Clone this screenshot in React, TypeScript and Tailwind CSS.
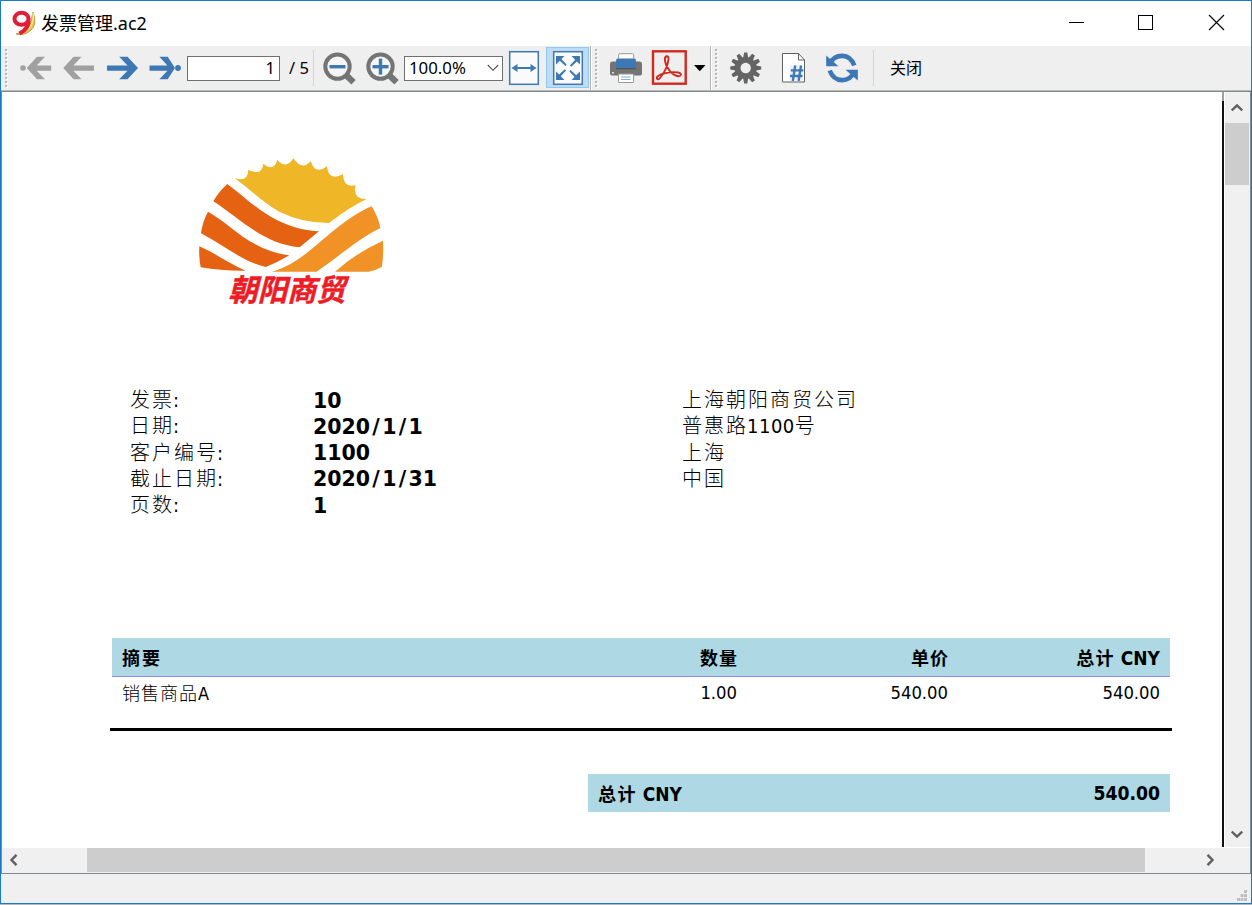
import React from "react";

const BLUE = "#3d78b5";
const GRAY = "#a0a0a0";

/* Toolbar drawings share one coordinate system: y runs from 46 to 90, x is the window x. */
function Tool({ x, w, children }: { x: number; w: number; children: React.ReactNode }) {
  return (
    <svg className="block h-[44px] shrink-0" width={w} height={44} viewBox={`${x} 46 ${w} 44`}>
      {children}
    </svg>
  );
}

function Grip({ x }: { x: number }) {
  return (
    <>
      {[49, 53, 57, 61, 65, 69, 73, 77, 81, 85].map((y) => (
        <g key={y}>
          <rect x={x} y={y + 1} width="2" height="2" fill="#fff" />
          <rect x={x - 1} y={y} width="2" height="2" fill="#b4b4b4" />
        </g>
      ))}
    </>
  );
}

function Magnifier({ cx, plus }: { cx: number; plus?: boolean }) {
  return (
    <>
      <path d={`M${cx + 8} 75 L${cx + 15.500} 82.300`} stroke="#747474" strokeWidth="6.2" />
      <circle cx={cx - 0.500} cy="66.6" r="12.200" fill="#f5f5f5" stroke="#747474" strokeWidth="4" />
      <rect x={cx - 8.500} y="65" width="16" height="3.4" fill={BLUE} />
      {plus && <rect x={cx - 2.200} y="58.6" width="3.4" height="16" fill={BLUE} />}
    </>
  );
}

const teeth = Array.from({ length: 12 }, (_, i) => i * 30);

function Toolbar() {
  return (
    <div className="flex h-[44px] shrink-0 items-center bg-[#efefef]">
      <Tool x={1} w={185}>
        <Grip x={6} />
        <circle cx="23" cy="68" r="2.8" fill={GRAY} />
        <path d="M26.7 68 37 56.8h8l-8.3 8.6H51.2v5.4H36.7l8.3 8.4h-8Z" fill={GRAY} />
        <path d="M63.3 68 73.6 56.8h8l-8.3 8.6H94v5.4H73.3l8.3 8.4h-8Z" fill={GRAY} />
        <path d="M138 68 127.5 56.8h-8.3l8.3 8.6H107v5.4h20.5l-8.3 8.4h8.3Z" fill={BLUE} />
        <path d="M175 68 167.7 56.8h-8.3l8 8.6H149.5v5.4h17.9l-8 8.4h8.3Z" fill={BLUE} />
        <circle cx="178" cy="68" r="2.9" fill={BLUE} />
      </Tool>
      <div className="ml-[1px] flex h-[25px] w-[93px] shrink-0 items-center justify-end border border-[#707070] bg-white pr-[4px] text-[16.5px] leading-none">
        1
      </div>
      <span className="ml-[9px] w-[24px] shrink-0 whitespace-pre text-[16.5px] leading-none">/ 5</span>
      <Tool x={313} w={91}>
        <rect x="313" y="50" width="1" height="36" fill="#d2d2d2" />
        <Magnifier cx={338} />
        <Magnifier cx={381} plus />
      </Tool>
      <div className="flex h-[25px] w-[99px] shrink-0 items-center justify-between border border-[#707070] bg-white pl-[4px] pr-[3px] text-[16.8px] leading-none">
        <span>100.0%</span>
        <svg width="12" height="8" viewBox="0 0 12 8">
          <path d="M.8 1 6 6.3 11.2 1" fill="none" stroke="#505050" strokeWidth="1.1" />
        </svg>
      </div>
      <Tool x={503} w={387}>
        <rect x="509.7" y="51.7" width="28.6" height="32.6" fill="#fafafa" stroke={BLUE} strokeWidth="1.5" />
        <path d="M511.5 68l6-4v2.9h13V64l6 4-6 4v-2.9h-13V72Z" fill={BLUE} />
        <rect x="546.5" y="47.5" width="42" height="40" fill="#c0dcf3" stroke="#90c8f6" />
        <rect x="553.7" y="51.7" width="28.6" height="32.6" fill="#fafafa" stroke={BLUE} strokeWidth="1.5" />
        {[0, 90, 180, 270].map((r) => (
          <path key={r} transform={`rotate(${r} 568 68)`} d="M556 56h8.500l-3.100 3.100 5.300 5.700-1.300 1.300-5.600-5.300-3.800 3.700Z" fill={BLUE} />
        ))}
        <rect x="590" y="46" width="1" height="44" fill="#b4b4b4" />
        <rect x="591" y="46" width="1" height="44" fill="#fff" />
        <Grip x={596} />
        <path d="M610 73.500V64q0-2.500 2.500-2.500H616v7h20v-7h3.500q2.500 0 2.500 2.500v9.500q0 2-2 2h-28q-2 0-2-2Z" fill="#747474" />
        <rect x="618.7" y="53.7" width="15" height="9" rx="1" fill="#fff" stroke="#989898" />
        <path d="M616 60.500q0-2 2-2h16q2 0 2 2v7.500h-20Z" fill={BLUE} />
        <rect x="616" y="68" width="20" height="1.300" fill="#555" />
        <rect x="618.5" y="74" width="15" height="8.500" rx=".5" fill="#fff" stroke="#989898" />
        <path d="M621 77h9.500M621 79.500h9.500" stroke="#75a3d2" strokeWidth=".9" />
        <rect x="612" y="72" width="2" height="1.500" fill="#ddd" />
        <rect x="653" y="51.300" width="32.700" height="32.400" fill="#efefef" stroke="#d2291f" strokeWidth="2.400" />
        <path
          d="M665 61C664 55.500 669 54.500 668.500 59 668 65 664 73 660 78 658 80.500 655.500 78.500 657.500 76.500 661 73 672 71.500 678 72.500 683 73.500 681 77 677 76 671 74.500 666 67 665 61Z"
          fill="none"
          stroke="#d2291f"
          strokeWidth="1.900"
        />
        <path d="M694 65h11.500l-5.700 6.200Z" fill="#000" />
        <rect x="710" y="46" width="1" height="44" fill="#b4b4b4" />
        <rect x="711" y="46" width="1" height="44" fill="#fff" />
        <Grip x={716} />
        {teeth.map((a) => (
          <path key={a} transform={`rotate(${a} 745.7 68)`} d="M743 59l1.100-6.500h3.200l1.100 6.500Z" fill="#646464" />
        ))}
        <circle cx="745.7" cy="68" r="8.100" fill="none" stroke="#646464" strokeWidth="5.800" />
        <path d="M782.500 53.500h16l6 6.500v22h-22Z" fill="#fff" stroke="#606060" />
        <path d="M798.500 53.500V60h6" fill="none" stroke="#606060" />
        <rect x="790" y="65" width="13" height="16" fill="#edf1f7" />
        <path d="M795.200 65.500 792.800 81M801 65.500 798.600 81M790.800 70.300h12.500M790 76h12.500" stroke={BLUE} strokeWidth="2.300" />
        <path d="M830 63.500C835 53.500 849.500 52.500 854.300 65.500" fill="none" stroke={BLUE} strokeWidth="4.600" />
        <path d="M826.200 55.500v10.700h12.300l-4-3.500-4-3.500Z" fill={BLUE} />
        <path d="M854 72.500C849 82.500 834.500 83.500 829.700 70.500" fill="none" stroke={BLUE} strokeWidth="4.600" />
        <path d="M857.800 80.500V69.800h-12.300l4 3.500 4 3.500Z" fill={BLUE} />
        <rect x="873" y="50" width="1" height="36" fill="#d2d2d2" />
      </Tool>
      <span className="text-[16px] leading-none">关闭</span>
    </div>
  );
}

function Logo() {
  return (
    <svg className="ml-[188px] block" width="210" height="165" viewBox="0 0 630 495">
      <path
        d="M134 84Q174 98 175 59Q216 80 220 41Q252 67 262 29Q288 60 310 25Q337 64 362 33Q376 77 411 48Q415 95 459 73Q460 115 497 105Q487 148 530 147Q482 169 417 219Q337 219 268 185C218 158 190 126 134 84Z"
        fill="#efb727"
      />
      <path d="M112 102C174 147 253 238 387 244L329 292C221 282 158 212 70 154Q86 125 112 102Z" fill="#e56212" />
      <path d="M54 185C123 222 178 300 298 316Q262 338 227 351C156 335 100 284 33 250Q37 216 54 185Z" fill="#e56212" />
      <path d="M28 289C75 309 119 342 167 362Q97 363 32 352Q26 321 28 289Z" fill="#e56212" />
      <path d="M545 169Q564 199 571 234C507 265 440 324 380 365H246C359 334 423 221 545 169Z" fill="#f09226" />
      <path d="M579 272Q581 310 576 350Q558 361 535 365H435Q499 308 579 272Z" fill="#f09226" />
      <text
        transform="translate(115 453) skewX(-14)"
        textLength="352"
        lengthAdjust="spacingAndGlyphs"
        fontSize="91"
        fontWeight="700"
        fontFamily="'Noto Sans CJK SC', sans-serif"
        fill="#ee1c25"
        stroke="#ee1c25"
        strokeWidth="1.5"
      >
        朝阳商贸
      </text>
    </svg>
  );
}

const details = [
  ["发票", "10"],
  ["日期", "2020/1/1"],
  ["客户编号", "1100"],
  ["截止日期", "2020/1/31"],
  ["页数", "1"],
];

function Value({ text }: { text: string }) {
  return (
    <>
      {text.split("/").map((part, i) => (
        <React.Fragment key={i}>
          {i > 0 && <span className="px-[2.3px]">/</span>}
          {part}
        </React.Fragment>
      ))}
    </>
  );
}

function Report() {
  return (
    <div className="flex h-full w-[1221px] flex-col pt-[58px] font-['DejaVu_Sans_Condensed','DejaVu_Sans','Noto_Sans_CJK_SC',sans-serif] [font-stretch:condensed]">
      <Logo />
      <div className="mt-[72px] flex h-[251px] pl-[128px] text-[20px] leading-[26.25px]">
        <div className="w-[183px] font-light tracking-[2px]">
          {details.map(([label]) => (
            <div key={label} className="flex h-[26.25px] whitespace-nowrap">
              <span>{label}</span>
              <span className="-ml-px font-normal">:</span>
            </div>
          ))}
        </div>
        <div className="w-[369px] pt-[0.5px] font-['DejaVu_Sans',sans-serif] text-[20.5px] font-bold [font-stretch:normal]">
          {details.map(([label, value]) => (
            <div key={label} className="h-[26.25px] whitespace-nowrap">
              <Value text={value} />
            </div>
          ))}
        </div>
        <div className="font-light tracking-[2px]">
          <div className="h-[26.25px]">上海朝阳商贸公司</div>
          <div className="h-[26.25px]">
            普惠路<span className="-ml-px font-normal tracking-[0.5px]">1100</span>号
          </div>
          <div className="h-[26.25px]">上海</div>
          <div className="h-[26.25px]">中国</div>
        </div>
      </div>
      <div className="ml-[108px] w-[1062px] border-b-[3px] border-black pl-[2px] pr-[2px] text-[18px]">
        <div className="grid h-[39px] grid-cols-[476px_160px_211px_211px] items-center border-b border-[#8c8cf5] bg-[#add8e4] pt-[2px] font-bold">
          <span className="pl-[10px] tracking-[2px]">摘要</span>
          <span className="pr-[10px] text-right tracking-[1px]">数量</span>
          <span className="pr-[10px] text-right tracking-[1px]">单价</span>
          <span className="pr-[10px] text-right">
            <span className="tracking-[1.5px]">总计</span> <span className="text-[19px]">CNY</span>
          </span>
        </div>
        <div className="grid h-[51px] grid-cols-[476px_160px_211px_211px] items-start pt-[1.5px] leading-[28px]">
          <span className="pl-[10px] pt-[1.5px] font-light tracking-[1px]">
            销售商品<span className="font-normal">A</span>
          </span>
          <span className="pr-[11px] text-right text-[18.3px]">1.00</span>
          <span className="pr-[11px] text-right text-[18.3px]">540.00</span>
          <span className="pr-[10px] text-right text-[18.3px]">540.00</span>
        </div>
      </div>
      <div className="ml-[586px] mt-[43px] flex h-[38px] w-[582px] items-center justify-between bg-[#add8e4] px-[10px] pt-[2px] text-[18px] font-bold">
        <span>
          <span className="tracking-[1.5px]">总计</span> <span className="text-[19px]">CNY</span>
        </span>
        <span className="text-[19.2px]">540.00</span>
      </div>
    </div>
  );
}

function Chevron({ angle }: { angle: number }) {
  return (
    <svg className="block shrink-0" width="12" height="12" viewBox="0 0 12 12">
      <path transform={`rotate(${angle} 6 6)`} d="M.8 8.500 6 3.500l5.200 5" fill="none" stroke="#606060" strokeWidth="2.400" />
    </svg>
  );
}

export default function App() {
  return (
    <div className="flex h-[905px] w-[1252px] flex-col overflow-hidden bg-[#b8b8b8] pb-[1px] font-['Noto_Sans','Noto_Sans_CJK_SC',sans-serif] text-black">
      <div className="flex h-[904px] flex-col border border-[#1979ca] bg-[#f0f0f0]">
        <header className="flex h-[45px] shrink-0 items-center bg-white pb-[2px] pl-[10px]">
          <svg width="25" height="26" viewBox="11 9 25 26" className="shrink-0">
            <path d="M33 11q5 13-3 19-6 5-14 3 13-4 15-13Z" fill="#e5c44a" stroke="#9f8436" strokeWidth=".7" />
            <path d="M33.200 12q1 11-5 16" fill="none" stroke="#f7e58c" strokeWidth="1.500" />
            <path d="M28.500 18a7 6.300 0 1 0-14 0 7 5.800 0 0 0 14 0c1 8-4 12-9 14.500" fill="none" stroke="#e21d38" strokeWidth="4" />
          </svg>
          <span className="ml-[5px] text-[18px] leading-none">发票管理.ac2</span>
          <svg className="ml-auto mr-[26px] shrink-0" width="158" height="18" viewBox="1067 14 158 18">
            <path d="M1069 22.500h15" stroke="#000" />
            <rect x="1138.500" y="15.500" width="14" height="14" fill="none" stroke="#000" />
            <path d="M1209 15l15 15M1224 15l-15 15" stroke="#000" strokeWidth="1.100" />
          </svg>
        </header>
        <Toolbar />
        <div className="h-[2px] shrink-0 border-b border-[#828790] bg-[#b9b9b9]" />
        <main className="flex h-[782px] shrink-0 flex-col border-b border-l border-r border-[#828790] bg-[#f0f0f0]">
          <div className="flex h-[756px] border-b border-white">
            <div className="w-[1220px] shrink-0 overflow-hidden bg-white">
              <Report />
            </div>
            <div className="flex w-[2px] shrink-0 flex-col bg-[#a0a0a0] pt-[9px]">
              <div className="grow bg-[#101010]" />
            </div>
            <div className="flex grow flex-col items-center border-l border-white bg-[#f0f0f0] pr-[1px]">
              <div className="flex h-[31px] items-center">
                <Chevron angle={0} />
              </div>
              <div className="h-[62px] w-[24px] bg-[#cdcdcd]" />
              <div className="mb-[7px] mt-auto">
                <Chevron angle={180} />
              </div>
            </div>
          </div>
          <div className="flex h-[24px] items-center">
            <div className="ml-[6px]">
              <Chevron angle={-90} />
            </div>
            <div className="ml-[67px] h-[24px] w-[1058px] bg-[#cdcdcd]" />
            <div className="ml-[59px]">
              <Chevron angle={90} />
            </div>
          </div>
        </main>
        <footer className="flex grow items-end justify-end pb-[2px] pr-[3px]">
          <svg width="11" height="12" viewBox="0 0 11 12">
            {[[7, 1], [3.500, 5], [7, 5], [0, 9], [3.500, 9], [7, 9]].map(([x, y]) => (
              <rect key={`${x}-${y}`} x={x} y={y} width="3" height="3" fill="#bfbfbf" />
            ))}
          </svg>
        </footer>
      </div>
    </div>
  );
}
